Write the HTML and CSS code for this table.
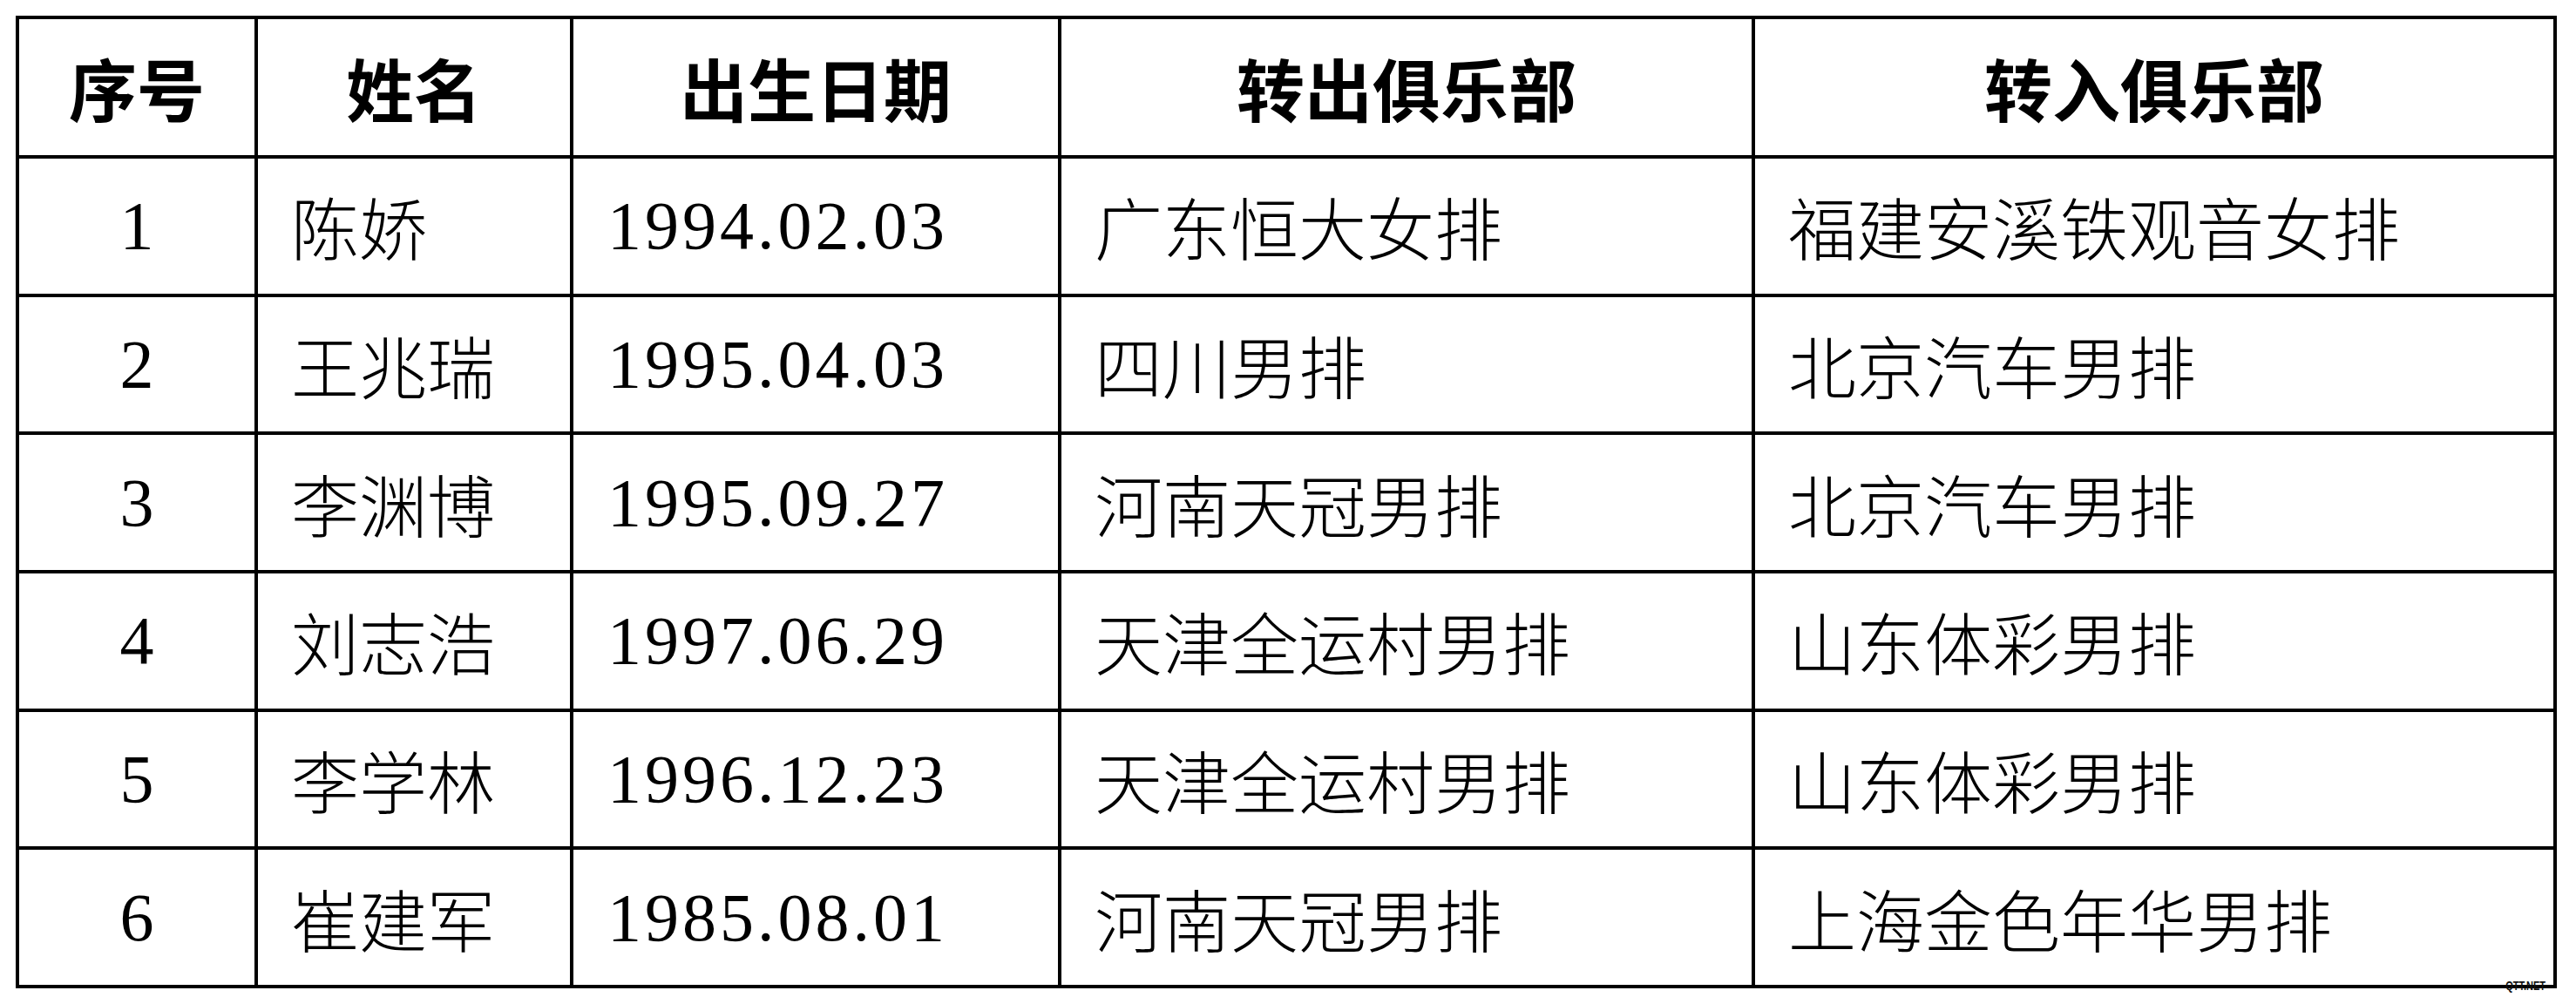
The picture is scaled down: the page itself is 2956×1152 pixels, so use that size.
FILE: index.html
```html
<!DOCTYPE html>
<html lang="zh-CN">
<head>
<meta charset="utf-8">
<title>转会名单</title>
<link rel="stylesheet" href="styles.css">
</head>
<body>
<div class="sheet">
  <div class="grid">
    <div class="cell head">序号</div>
    <div class="cell head">姓名</div>
    <div class="cell head">出生日期</div>
    <div class="cell head">转出俱乐部</div>
    <div class="cell head">转入俱乐部</div>

    <div class="cell num">1</div>
    <div class="cell txt">陈娇</div>
    <div class="cell date">1994.02.03</div>
    <div class="cell txt">广东恒大女排</div>
    <div class="cell txt">福建安溪铁观音女排</div>

    <div class="cell num">2</div>
    <div class="cell txt">王兆瑞</div>
    <div class="cell date">1995.04.03</div>
    <div class="cell txt">四川男排</div>
    <div class="cell txt">北京汽车男排</div>

    <div class="cell num">3</div>
    <div class="cell txt">李渊博</div>
    <div class="cell date">1995.09.27</div>
    <div class="cell txt">河南天冠男排</div>
    <div class="cell txt">北京汽车男排</div>

    <div class="cell num">4</div>
    <div class="cell txt">刘志浩</div>
    <div class="cell date">1997.06.29</div>
    <div class="cell txt">天津全运村男排</div>
    <div class="cell txt">山东体彩男排</div>

    <div class="cell num">5</div>
    <div class="cell txt">李学林</div>
    <div class="cell date">1996.12.23</div>
    <div class="cell txt">天津全运村男排</div>
    <div class="cell txt">山东体彩男排</div>

    <div class="cell num">6</div>
    <div class="cell txt">崔建军</div>
    <div class="cell date">1985.08.01</div>
    <div class="cell txt">河南天冠男排</div>
    <div class="cell txt">上海金色年华男排</div>
  </div>
  <div class="mark">QTT.NET</div>
</div>
</body>
</html>
```
FILE: styles.css
```css
html, body {
  margin: 0;
  padding: 0;
  background: #fff;
}
body {
  padding: 18px;
  font-family: "Noto Sans CJK SC", sans-serif;
  color: #000;
}
.sheet {
  position: relative;
  width: 2916px;
}
.grid {
  display: grid;
  grid-template-columns: 270px 358px 556px 792px 916px;
  grid-template-rows: 156px repeat(6, 1fr);
  gap: 4px;
  padding: 4px;
  height: 1116px;
  box-sizing: border-box;
  background: #000;
}
.cell {
  background: #fff;
  display: flex;
  align-items: center;
  font-size: 78px;
  line-height: 1;
  white-space: nowrap;
}
.head {
  justify-content: center;
  font-weight: 700;
}
.num {
  justify-content: center;
  font-family: "Liberation Serif", serif;
}
.txt {
  padding-left: 38px;
  font-weight: 300;
}
.date {
  padding-left: 39px;
  font-family: "Liberation Serif", serif;
  letter-spacing: 4px;
}
.mark {
  position: absolute;
  right: 13px;
  bottom: -5px;
  font-family: "Liberation Sans", sans-serif;
  font-weight: 700;
  font-size: 11px;
  line-height: 1;
  color: #111;
  transform: scaleY(1.3);
  transform-origin: bottom right;
}
```
